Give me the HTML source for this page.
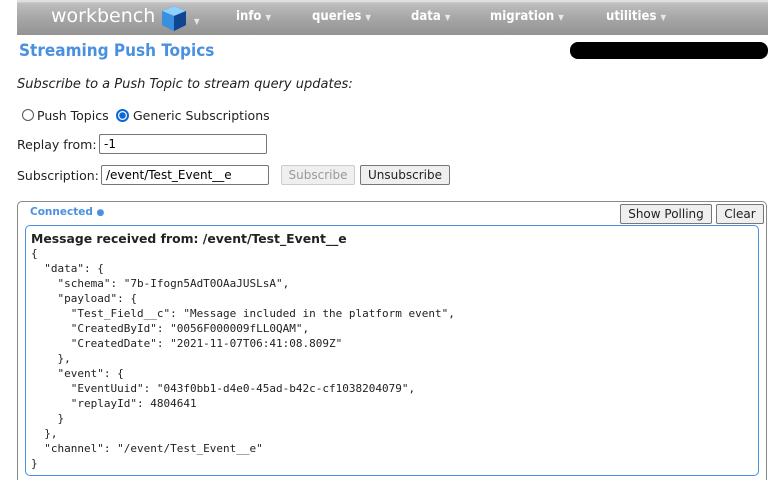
<!DOCTYPE html>
<html><head><style>
html,body{margin:0;width:779px;height:480px;overflow:hidden}
body{background:#fff;font-family:"DejaVu Sans","Liberation Sans",sans-serif;font-size:12px;color:#222;position:relative}
.a{position:absolute;white-space:nowrap}
#nav{left:17px;top:0;width:751px;height:35px;background:linear-gradient(#cfcfcf 0,#bdbdbd 6%,#a8a8a8 45%,#939393 100%);border-top:2px solid #e0e0e0;box-sizing:border-box}
.nv{color:#fff;font-family:"DejaVu Sans Condensed","DejaVu Sans",sans-serif;font-size:13px;font-weight:bold;top:9px}
.nv i{font-style:normal;font-size:8px;color:#e8e8e8;font-weight:normal}
input.t{position:absolute;border:1px solid #767676;border-radius:2px;height:20px;box-sizing:border-box;font:12px "DejaVu Sans",sans-serif;padding:0 4px}
.btn{position:absolute;border:1px solid #767676;border-radius:2px;background:#efefef;font:12px "DejaVu Sans",sans-serif;height:20px;box-sizing:border-box;text-align:center;line-height:18px}
pre{margin:0;font-family:"DejaVu Sans Mono","Liberation Mono",monospace;font-size:11px;line-height:15px;letter-spacing:0}
</style></head><body>
<div id="nav" class="a"></div>
<div class="a" style="left:51px;top:5px;color:#fff;font-size:19px;font-family:'DejaVu Sans',sans-serif;letter-spacing:0px">workbench</div>
<svg class="a" style="left:160px;top:4px" width="28" height="28" viewBox="0 0 28 28"><polygon points="14,2 26,7 26,21 14,27 2,21 2,7" fill="#1a5fb0"/><polygon points="14,2 26,7 14,12 2,7" fill="#8fd0ff"/><polygon points="2,7 14,12 14,27 2,21" fill="#3a90e0"/><polygon points="14,12 26,7 26,21 14,27" fill="#0f4690"/></svg>
<div class="a nv" style="left:194px;top:13px"><i>▼</i></div>
<div class="a nv" style="left:236px">info <i>▼</i></div>
<div class="a nv" style="left:312px">queries <i>▼</i></div>
<div class="a nv" style="left:411px">data <i>▼</i></div>
<div class="a nv" style="left:490px">migration <i>▼</i></div>
<div class="a nv" style="left:606px">utilities <i>▼</i></div>
<div class="a" style="left:19px;top:41px;color:#4a90e2;font-size:17px;font-weight:bold;font-family:'DejaVu Sans Condensed','DejaVu Sans',sans-serif">Streaming Push Topics</div>
<div class="a" style="left:570px;top:42px;width:198px;height:17px;background:#000;border-radius:8px"></div>
<div class="a" style="left:17px;top:77px;font-style:italic;font-size:13px">Subscribe to a Push Topic to stream query updates:</div>
<div class="a" style="left:22px;top:109px;width:12px;height:12px;border:1px solid #555;border-radius:50%;box-sizing:border-box"></div>
<div class="a" style="left:37px;top:108px;font-size:12.5px">Push Topics</div>
<div class="a" style="left:116px;top:109px;width:13px;height:13px;border:2px solid #0a68d8;border-radius:50%;box-sizing:border-box;background:radial-gradient(#0a68d8 3px,#fff 3.5px)"></div>
<div class="a" style="left:133px;top:108px;font-size:12.5px">Generic Subscriptions</div>
<div class="a" style="left:17px;top:137px;font-size:12.5px">Replay from:</div>
<input class="t" style="left:99px;top:134px;width:168px" value="-1">
<div class="a" style="left:17px;top:168px;font-size:12.5px">Subscription:</div>
<input class="t" style="left:101px;top:165px;width:168px" value="/event/Test_Event__e">
<div class="btn" style="left:281px;top:165px;width:74px;color:#999;border-color:#ccc">Subscribe</div>
<div class="btn" style="left:360px;top:165px;width:90px">Unsubscribe</div>
<div class="a" style="left:17px;top:201px;width:750px;height:285px;border:1px solid #888;border-radius:5px;box-sizing:border-box"></div>
<div class="a" style="left:30px;top:206px;color:#4a90e2;font-weight:bold;font-size:10.5px">Connected <span style="font-size:9px">●</span></div>
<div class="btn" style="left:620px;top:204px;width:92px">Show Polling</div>
<div class="btn" style="left:716px;top:204px;width:48px">Clear</div>
<div class="a" style="left:25px;top:225px;width:734px;height:251px;border:1px solid #4a90e2;border-radius:5px;box-sizing:border-box"></div>
<div class="a" style="left:31px;top:231px;font-weight:bold;font-size:12.4px">Message received from: /event/Test_Event__e</div>
<div class="a" style="left:31px;top:246px"><pre>{
  "data": {
    "schema": "7b-Ifogn5AdT0OAaJUSLsA",
    "payload": {
      "Test_Field__c": "Message included in the platform event",
      "CreatedById": "0056F000009fLL0QAM",
      "CreatedDate": "2021-11-07T06:41:08.809Z"
    },
    "event": {
      "EventUuid": "043f0bb1-d4e0-45ad-b42c-cf1038204079",
      "replayId": 4804641
    }
  },
  "channel": "/event/Test_Event__e"
}</pre></div>
</body></html>
